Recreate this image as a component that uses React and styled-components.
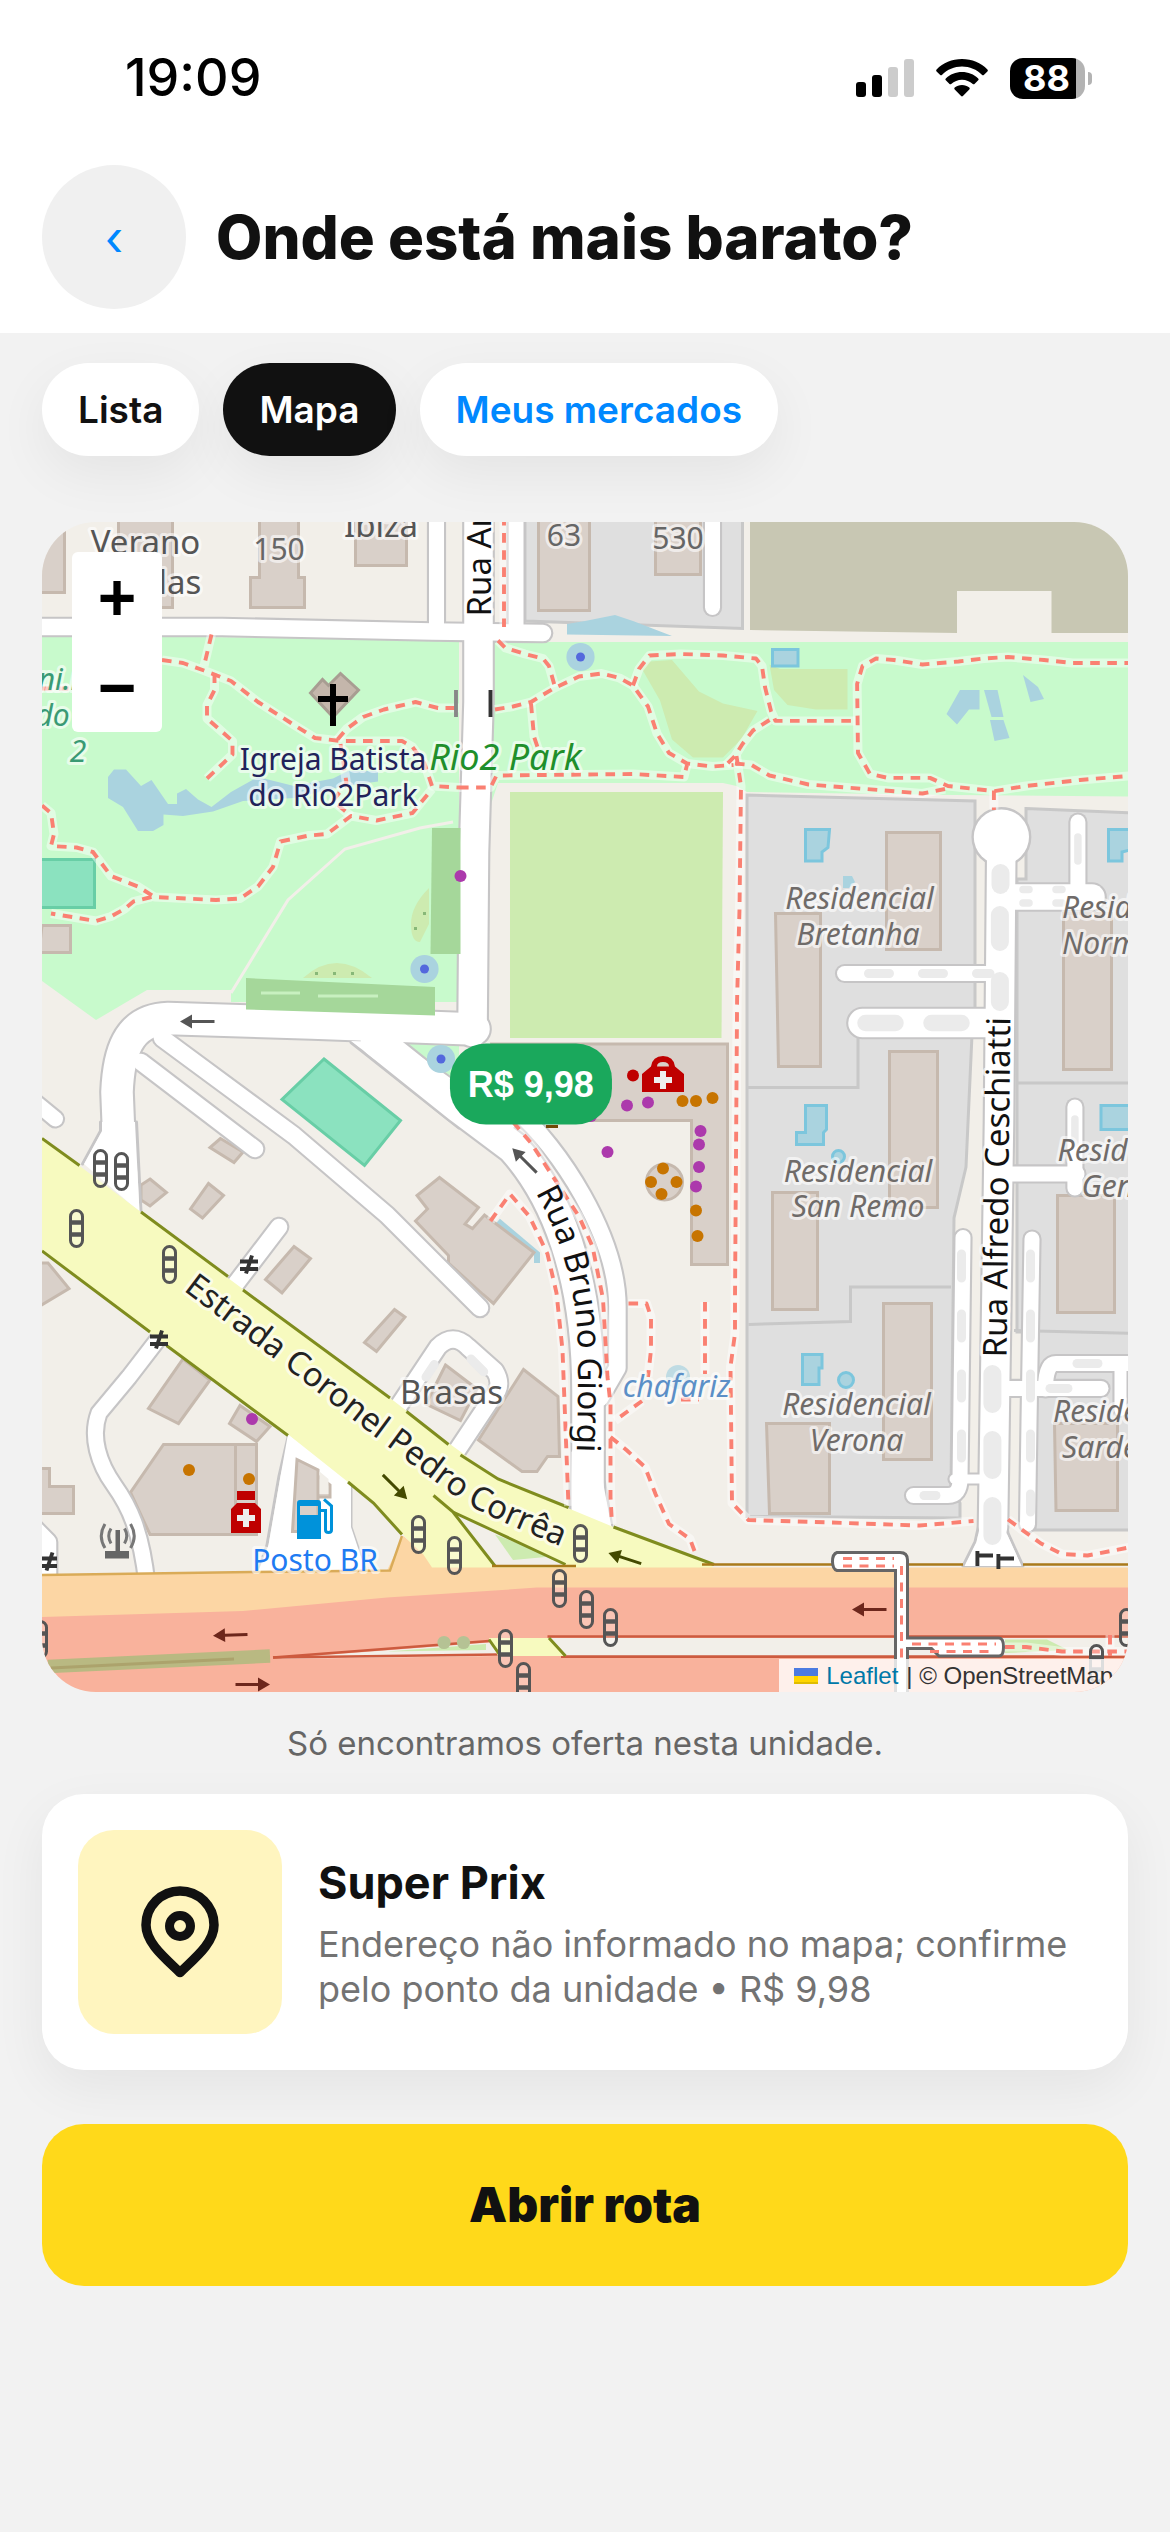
import React from 'react';
import styled, { createGlobalStyle } from 'styled-components';

export default () => (
  <Page>
    <GlobalStyle />

    <Top>
      <StatusBar>
        <Time>19:09</Time>
        <StatusIcons>
          <SignalIcon />
          <WifiIcon />
          <Battery>
            <Charge>88</Charge>
            <Cap />
          </Battery>
        </StatusIcons>
      </StatusBar>

      <Header>
        <Back aria-label="Voltar">‹</Back>
        <Title>Onde está mais barato?</Title>
      </Header>
    </Top>

    <Main>
      <Tabs>
        <Tab>Lista</Tab>
        <Tab $active>Mapa</Tab>
        <Tab $link>Meus mercados</Tab>
      </Tabs>

      <Map>
        <MapDrawing />
        <Zoom>
          <ZoomButton aria-label="Aproximar">+</ZoomButton>
          <ZoomButton aria-label="Afastar">−</ZoomButton>
        </Zoom>
        <Price>R$ 9,98</Price>
        <Attribution>
          <Flag viewBox="0 0 12 8" aria-hidden="true">
            <path fill="#4c7be1" d="M0 0h12v4H0z" />
            <path fill="#ffd500" d="M0 4h12v3H0z" />
            <path fill="#e0bc00" d="M0 7h12v1H0z" />
          </Flag>
          <a href="https://leafletjs.com">Leaflet</a>
          <span>| © OpenStreetMap</span>
        </Attribution>
      </Map>

      <Note>Só encontramos oferta nesta unidade.</Note>

      <Card>
        <PinBox>
          <PinIcon />
        </PinBox>
        <div>
          <Store>Super Prix</Store>
          <Address>
            Endereço não informado no mapa; confirme pelo ponto da unidade • R$
            9,98
          </Address>
        </div>
      </Card>

      <RouteButton>Abrir rota</RouteButton>
    </Main>
  </Page>
);

/* icons */

const SignalIcon = () => (
  <svg width="58" height="38" viewBox="0 0 58 38" aria-hidden="true">
    <rect x="0" y="23" width="10" height="15" rx="3" />
    <rect x="16" y="16" width="10" height="22" rx="3" />
    <rect x="32" y="8" width="10" height="30" rx="3" fill="#ccc" />
    <rect x="48" y="0" width="10" height="38" rx="3" fill="#ccc" />
  </svg>
);

const WifiIcon = () => (
  <svg width="52" height="38" viewBox="0 0 52 38" aria-hidden="true">
    <path d="M26 0C16 0 7 4 .6 10.400q-.9 1 0 2l3.600 3.600q.8.7 1.700 0C11.300 10.600 18.400 7.600 26 7.600s14.700 3 20.100 8.400q.9.7 1.700 0l3.600-3.600q.9-1 0-2C45 4 36 0 26 0z" />
    <path d="M26 13c-6.200 0-11.900 2.400-16.200 6.400q-1 .9 0 1.900l3.700 3.700q.8.700 1.700 0c2.900-2.700 6.700-4.300 10.800-4.300s7.900 1.600 10.800 4.300q.9.7 1.700 0l3.700-3.700q1-1 0-1.900C37.900 15.400 32.200 13 26 13z" />
    <path d="M26 26c-2.800 0-5.300 1-7.300 2.600q-1 .9 0 1.800l6.400 6.700q.9.900 1.800 0l6.400-6.700q1-.9 0-1.800C31.300 27 28.800 26 26 26z" />
  </svg>
);

const PinIcon = () => (
  <svg width="78" height="92" viewBox="0 0 78 92" aria-hidden="true">
    <path
      d="M39 86.500C24 72 5 57 5 39a34 34 0 0 1 68 0c0 18-19 33-34 47.500z"
      fill="none"
      stroke="#111"
      strokeWidth="9.500"
      strokeLinejoin="round"
    />
    <circle cx="39" cy="40" r="10.500" fill="none" stroke="#111" strokeWidth="9" />
  </svg>
);

/* map */

const greyAreas = [
  'M161-2H233.500V35.500L190 34 161 33z',
  'M235 91L311 93V171H310L308 215 304 232 303 321 306 327V332L235 331.500z',
  'M328 95.500L364 97V336H331V270H325V119H328z',
];

const greyLines = [
  'M235 188.500H272V172',
  'M303 255H269.500V266.500L235.500 267.500',
  'M325 187H364',
  'M324 269.500L364 270.500',
];

const water = [
  'M175 34L181 33 191 31 197 33 210 38 175 37.500z',
  'M22 85L24 82.500H28L33 88 36.500 86 42 94H45V90.500L48 89 52 92.500 56.500 95 63 90 72 85 84 88 97 85.500 102 83H112V86.500L101 88 84 92 67 93 57 96.500 47 98 40.500 97.500V101L37 103H32L27 95 22 92z',
  'M301.500 64L306 56H312.500V62.500H309L305 67.500z',
  'M314 56H318.500L320.500 65H316.500z',
  'M316 66H320.500L322.500 72 317.500 73z',
  'M327 51L332 55 334 59 329.500 60z',
  'M267 118H270L271 120 269 122H267z',
];

const pools = [
  'M243.500 42.500H252V48H243.500z',
  'M254.500 102.500H262.500L262 108.500 260 110V113H254.500z',
  'M355.500 102.500H364V109L360 110V113H355.500z',
  'M254.500 194.500H261.500V202.500L260.500 203.500V207.500H251.500V203.500H254.500z',
  'M353 194.500H364V202.500H353z',
  'M253.500 277.500H260V282H259V287.500H253.500z',
];

const buildings = [
  'M-2-2H7.500V23.500H-2z',
  'M25.500-2H43.500V28.500H25.500z',
  'M72.500-2H85.500V18.500H87.500V28.500H69.500V18.500H72.500z',
  'M104.500-2H121.500V14.500H104.500z',
  'M165.500-2H182.500V29.500H165.500z',
  'M204.500-2H219.500V17.500H204.500z',
  'M0 134.500H9.500V143.500H-1z',
  'M281.500 103.500H299.500V142.500H281.500z',
  'M244.500 130.500H259.500V181.500H245.500z',
  'M340.500 130.500H356.500V182.500H340.500z',
  'M282.500 176.500H298.500V228.500H282.500z',
  'M243.500 223.500H258.500V262.500H243.500z',
  'M338.500 224.500H357.500V263.500H338.500z',
  'M280.500 260.500H296.500V312.500H280.500z',
  'M241.500 300.500H262.500V330.500H242.500z',
  'M337.500 300.500H358.500V329.500H338z',
  'M150 174H228.500V247.500H216.500V199.500H160z',
  'M132.500 218.500L145.500 228.500 141 234 143.500 235.500 147.500 231 164 243.500 150.500 260.500 147 257.500 135.500 247V244.500L124.500 233 128.500 229 125 224.500z',
  'M59.500 205.500L56 208.500 64 213.500 67 210z',
  'M36 219L41.500 223.500 36 228 33 226V221z',
  'M55.500 220.500L60.500 224.500 53.500 232 49.500 229z',
  'M84 241.500L89.500 245.500 80 257 74.500 252.500z',
  'M-1 247H2L9 255.500-1 261.500z',
  'M117.500 262.500L121 265 111.500 276.500 107.500 273.500z',
  'M47 279L56 286 45.500 300.500 35.500 295.500z',
  'M66 294.500L76 301.500 71.500 306.500 62.500 300.500z',
  'M40.500 307.500H71.500V337.500H36L29.500 323.500z',
  'M-1 315.500H2.500V321.500H10.500V330.500H-1z',
  'M134.500 281L145 289 139.500 299.500 128 294z',
  'M160.500 282.500L172 291.500 172.500 311.500H168.500L165 316.500H160L145.500 306 156 289.500z',
];

// [path, width]
const roads = [
  ['M131.500-3V36', 5],
  ['M158-3V36', 5],
  ['M223.500-3V28.500', 5],
  ['M-4 35H60L130 36.500 167 37', 5.500],
  ['M145.500-3V60L144 110 143.500 170', 9.500],
  ['M144 169L90 167 42 165.500C28 166 25.500 178 25 190L26 215', 10.500],
  ['M40 172L84 204.500 115 231 128 244 146 262', 5.500],
  ['M33 180L71 209', 5.500],
  ['M-4 192L4.500 199', 5],
  ['M79 235L63 256', 5.500],
  ['M111.500 173L139 195 157 208.500C171 224 182 250 182 290V336', 10.500],
  ['M158 196C172 208 192 238 191.800 262V282L186 292', 5.500],
  ['M39 272L29 285 19 297C16 305 19 314 24 321S33 336 35 354', 5],
  ['M118 296L126 284 132 275Q137 270 142 275L151 283Q154 288 150 292L138 310', 5.500],
  ['M2 354V340L-3 335', 5.500],
  ['M267.500 150.500H316', 5],
  ['M273.500 167H318', 9.500],
  ['M345.300 100V124', 5],
  ['M322 125H350', 8.500],
  ['M344.300 195V222', 5],
  ['M322 217.300H345', 5],
  ['M307 238.500L306 319Q306 324.500 302 324.500H290.500', 5],
  ['M304 319H314', 3],
  ['M330 239L329 300 328.500 334', 5],
  ['M362 280.500H338Q334.500 280.500 334.500 289', 5],
  ['M359.500 281V296', 4],
  ['M320 288.800H353', 5],
  ['M319.800 105L319 200 317 335', 9.500],
];

// inner marks of the service and pedestrian streets: [path, width, dash]
const marks = [
  ['M319.500 117V121', 6, '4 20'],
  ['M319.300 131V160', 6, '9 13'],
  ['M316.800 284V338', 6, '10 12'],
  ['M275.500 150.500H316', 3, '7 11'],
  ['M274.500 167H312', 5.500, '10 12'],
  ['M306.500 244V314', 3, '8 12'],
  ['M294 324.500H298', 3, '6 12'],
  ['M329.500 244V330', 3, '8 12'],
  ['M345.300 105V113', 2.500, '8 20'],
  ['M327 122.500H346', 2.500, '2 9'],
  ['M327 127H346', 2.500, '2 9'],
  ['M344.300 199V208', 2.500, '8 20'],
  ['M345 280.500H352', 3, '8 20'],
  ['M336 288.800H342', 3, '8 20'],
  ['M128 285L132 279', 3, '5 20'],
  ['M143 279L149 285', 3, '6 20'],
];

const footways = [
  'M40 46L47 47 54 49.500 63 53 72 60 83 67 91 72 99.500 73H120L123.500 75 127.500 80.500 130 88 139 88.500',
  'M56.500 37.500L54 48',
  'M57.500 50.500V56L55 61V65.500L59 69 63.500 73V77.500L55 85.500',
  'M98.500 72.500L101.500 69 107 65 114 62.500 124.500 60 132 62H139',
  'M151 62.500L157 61.500 163 60 170.500 55.500 179 51.500 186.500 50.500 192.500 52 197 54.500 202 61.500 205 70.500 209 77 215 80.500 223.500 81.500 230.500 81',
  'M152 39.500L154.500 42 161 44 167 45.500 169 48 171 55',
  'M163 60.500L164 71.500 165.500 76',
  'M139 88.500H149.500L151.500 84.500 197 84 214 85 215 81',
  'M197 54.500L199 49 202.500 44.500 213 44 227 44.500 238 45.500 240 48 241 55 243 63 244.500 66.300H271.500',
  'M242.500 66L237 69.500 233.500 74 231 78 228 81',
  'M231 80.500L236.500 81 242.500 84.500 255.500 87.500 274.500 89 293.500 90.500 301 89',
  'M364 47H343.500L334 46 322 45 314 45.500 305.500 46.500 293.500 47.500 284 46 278 45.500 273.500 48 271.700 54 272 77 276 84 282 85.300H296L302 88 317.500 89.700 328 88 346 86 364 84.500',
  'M317.300 89.500V96',
  'M231.500 78L233 88 232.500 129 231.700 159 231 259V270.500L229.500 281.500 230 327 235.500 332.700 263 333.500 292.500 334.500 310.500 333',
  'M322 332.500L333 340.500 340 344 348.500 344.500 364 341.500',
  'M0 94.500L3 97 4 104 3 108 11.500 108.500 17 110 23 118 32 121.500 37.500 125 58 126 66 125.500 72 121.500 77 115 79.500 106.500 89 104.500 95 104 103 98 111.500 99.500 123.500 97 130 89',
  'M36.500 125L30.500 126.500 27.500 129 23 131.500 18 133 3 130.500',
  'M99.500 74L101.500 87 97 93 103 98',
  'M0 55.500H9',
  'M154-2V35',
  'M149.500 233L156 224 162.500 231.500 168.500 244 171.500 257 173.500 276 175.500 328',
  'M157 200L163 207 179 231.500 183.500 241.500 187 259 188.500 285 189.500 294V325L190 334',
  'M195.500 260.500H201.500L203 265V276L202 285M200 293L191 299.500M213 292.500H219M221 260V284',
  'M189.500 305L195 309.500 201 315 204.500 324 209 334 216 339 217.500 343',
  'M321 375L328 375 340 376.500H364M356 371V378',
];

const dots = [
  ['#ac39ac', 139.500, 118],
  ['#bf0000', 197, 184.500],
  ['#ac39ac', 195, 194.500],
  ['#ac39ac', 202, 193.500],
  ['#c77400', 213.500, 193],
  ['#c77400', 218, 193],
  ['#c77400', 223.500, 192],
  ['#ac39ac', 219.500, 203],
  ['#ac39ac', 219, 207.500],
  ['#ac39ac', 219, 215],
  ['#ac39ac', 218, 221.500],
  ['#c77400', 218, 229.500],
  ['#c77400', 218.500, 238],
  ['#ac39ac', 188.500, 210],
  ['#ac39ac', 183, 198],
  ['#c77400', 207, 215.500],
  ['#c77400', 203, 220],
  ['#c77400', 211.500, 220],
  ['#c77400', 206.500, 224],
  ['#ac39ac', 70, 299],
  ['#c77400', 49, 316],
  ['#c77400', 69, 319],
];

const lights = [
  [19.500, 215.500],
  [26.500, 216.500],
  [11.500, 235.500],
  [42.500, 247.500],
  [125.500, 337.500],
  [137.500, 344.500],
  [179.500, 340.500],
  [172.500, 355.500],
  [181.500, 362.500],
  [154.500, 375.500],
  [160.500, 386.500],
  [-0.500, 372.500],
  [189.500, 368.500],
  [361.500, 368.500],
  [351.500, 380.500],
];

// [x, y, angle, colour]
const arrows = [
  [52, 166.500, 180, '#555'],
  [161, 213, 225, '#555'],
  [117.500, 321.500, 45, '#444a00'],
  [63, 371, 178, '#6d271c'],
  [70, 387.500, 0, '#6d271c'],
  [276, 362.500, 180, '#6d271c'],
  [194.500, 345.500, 198, '#444a00'],
];

const MapDrawing = () => (
  <Drawing viewBox="0 0 362 390" role="img" aria-label="Mapa">
    <defs>
      <path id="estrada" d="M47 256L84 284 111 305 138 325Q146 331 182 345" />
      <path id="bruno" d="M164.500 223.500Q177.500 247 178.500 272 179 290 178 318" />
      <path id="alfredo" d="M321.500 278.500L323 145" />
    </defs>

    <path fill="#f2efe9" d="M0 0H362V390H0z" />
    <path fill="#c8c7b3" d="M236-1H363V37H336.500V23H305V37L236 36z" />
    {greyAreas.map(d => (
      <path key={d} d={d} fill="#dfdfdf" stroke="#c8c8c8" />
    ))}
    <g fill="none" stroke="#c8c8c8">
      {greyLines.map(d => (
        <path key={d} d={d} />
      ))}
    </g>

    {/* park */}
    <g fill="#c8facc">
      <path d="M0 38L139 39V160H63V156H35L18 166 0 153z" />
      <path d="M149 40H362V91.500L304 91 235 90 231.500 88 227 87H152L149 96z" />
      <path d="M120 174H139V188z" />
    </g>
    <path
      d="M63 157L82 126 101 109 126 102 137 100"
      fill="none"
      stroke="#f2efe9"
    />
    <g fill="#cdebb0">
      <path d="M156 90H227L226.500 172H156z" />
      <path d="M200 49L202.500 46.500 210 46 219 56.500 227 60.500 238.500 63 233 72.500 227 78.500H217L210 72.500 206 59.500z" />
      <path d="M242.500 47.500L246 49H268.500V62.500H258L248.500 61 244 56z" />
      <path d="M129 122Q123 128 123 134 123 140 126 140L129 134zM87 152Q98 142 110 152z" />
    </g>
    <g fill="#88b878">
      <path d="M127 130h1v1h-1zM124 135h1v1h-1zM91 150h1v1h-1zM97 150h1v1h-1zM103 150h1v1h-1z" />
    </g>
    <g fill="#8be2bf" stroke="#68cea6">
      <path d="M-1 112.500H17.500V128.500H-1z" />
      <path d="M94 179L119.500 199.500 107.500 214.500 80 192.500z" />
    </g>

    <g fill="#aad3df">
      {water.map(d => (
        <path key={d} d={d} />
      ))}
      <circle cx="212" cy="285" r="4" opacity=".7" />
    </g>
    <path d="M152 233L165 244V247" fill="none" stroke="#aad3df" strokeWidth="2" />
    <g fill="#aad3df" stroke="#7cc6dd">
      {pools.map(d => (
        <path key={d} d={d} />
      ))}
      <circle cx="265.500" cy="211.500" r="2" />
      <circle cx="268" cy="286" r="2.500" />
    </g>

    <g fill="#d9d0c9" stroke="#c6b9ae">
      {buildings.map(d => (
        <path key={d} d={d} />
      ))}
      <circle cx="207.500" cy="220" r="6" />
      <path d="M64.500 307V337" />
    </g>
    <path
      d="M89.500 57L93.500 52.500 95.500 54.500 99.500 50.500 105.500 56 97 65z"
      fill="#c4b6ab"
      stroke="#a89d92"
    />

    {/* streets: casing first, then the white fill */}
    <g
      fill="none"
      stroke="#c6c5c6"
      strokeLinecap="round"
      strokeLinejoin="round"
    >
      {roads.map(([d, w]) => (
        <path key={d} d={d} strokeWidth={w + 1.400} />
      ))}
      <circle cx="319.800" cy="105" r="9.500" />
      <path d="M313 331L311 340 307 348H327L322 337 321 331" />
      <path d="M82 305L79 318 75 341 72 350M103 321V335L108 350" />
      <path d="M19.500 200V203L13.500 214M31.500 200L33 230" />
      <path d="M187.500 320L190 335M176 320V329" />
      <path d="M103 173.500L139 202M119.500 173.500L160 202" />
    </g>
    <g fill="none" stroke="#fff" strokeLinecap="round" strokeLinejoin="round">
      {roads.map(([d, w]) => (
        <path key={d} d={d} strokeWidth={w} />
      ))}
    </g>
    <g fill="#fff">
      <circle cx="319.800" cy="105" r="9.200" />
      <path d="M313.500 331L311.500 340 307.500 348H326.500L321.500 337 320.500 331z" />
      <path d="M82 304L103 320V335L108 350H72L75.500 341 79.500 318z" />
      <path d="M20 200V203L14 214 32.500 230 31 200z" />
      <path d="M176.500 310V330L190 336 187 320V292z" />
      <path d="M103 173L119.500 173.500 158 201 150 209z" />
    </g>
    <path
      d="M85 312.500L92 316V336.500H83.500zM92 318L96 321V325H92z"
      fill="#d9d0c9"
      stroke="#c6b9ae"
    />
    <path d="M92.500 316.500L95.500 319V324H92.500z" fill="#f2efe9" />
    <g fill="none" stroke="#ebebeb" strokeLinecap="round">
      {marks.map(([d, w, dash]) => (
        <path key={d} d={d} strokeWidth={w} strokeDasharray={dash} />
      ))}
    </g>

    {/* hedges */}
    <g fill="#a5d79a">
      <path d="M130 102H139.500V144H129.500z" />
      <path d="M68 152L131 155V164.500L68 162.500z" />
      <path d="M73 157H86M92 158H112" stroke="#c8f0c0" />
    </g>

    {/* Estrada Coronel Pedro Corrêa */}
    <path
      fill="#f7fabf"
      d="M0 205L13 215 33 230 62 252 116 292 135.500 307 152 319 176 329 190.500 335 223.500 347V349H130L120 337 110.500 326.500 102 320 82.500 304.500 36 270.500 0 243z"
    />
    <path fill="#f2efe9" d="M137 330L151 336 174.500 348H150.500z" />
    <path fill="#cdebb0" d="M151 337.500L164 342.500 168 345 157 346z" />
    <g fill="none" stroke="#7f8c1e">
      <path d="M0 205.500L12.500 214.500M33 230L62 251.500M67 256L116 292M121.500 296.500L135.500 307.500M139.500 311L152 319 175.500 328.500M190.500 335L224 347.500" />
      <path d="M0 243L36 270M41.500 274.500L82 304.500M102 320L110.500 327 120 337.500" />
      <path d="M130.500 324.500L137 330 151 336.500 174.500 347.500M137 330L151 348" />
    </g>

    {/* avenue */}
    <path
      fill="#fcd6a4"
      d="M0 351L70 350 115 349.500 120.500 338 127 344 130 348.500H362V356L0 366z"
    />
    <path
      d="M0 351L70 350 116 349.500 120 338"
      fill="none"
      stroke="#d9ab58"
      strokeWidth=".800"
    />
    <path
      d="M150 348H178M220 347.500H307M327 347.500H362"
      stroke="#a97a1b"
      strokeWidth=".900"
    />
    <path
      fill="#f9b29c"
      d="M0 365L67 363 115 358.500 165 355.200H362V390H0z"
    />
    <path fill="#f2efe9" d="M77 379L149 373.500 169 372H362V378H151z" />
    <path fill="#cdebb0" d="M115 376.500L148 374V376zM321 372.500H335L342 376 321 377z" />
    <g fill="none" stroke="#cd5b3f" strokeWidth=".900">
      <path d="M77 378.500L149 373M168.500 371.500H362" />
      <path d="M77 378.500L152 377.500M173 378.200H362" />
    </g>
    <path d="M2 381.500L76 378" stroke="#b9b982" strokeWidth="4.500" />
    <path d="M3 382L64 379" stroke="#aca36c" />
    <path fill="#f7fabf" d="M149 372H168.500L174 378H152z" />
    <path d="M149 372.500L152.500 377.500M169 372L174.500 378" stroke="#7f8c1e" />
    <g fill="#b5c294">
      <circle cx="134" cy="373.500" r="2.200" />
      <circle cx="140.500" cy="373.500" r="2.200" />
    </g>

    <g fill="none" strokeLinejoin="round">
      <g stroke="#fff" strokeOpacity=".45" strokeWidth="3">
        {footways.map(d => (
          <path key={d} d={d} />
        ))}
      </g>
      <g stroke="#fa8072" strokeWidth="1.300" strokeDasharray="3.200 2.500">
        {footways.map(d => (
          <path key={d} d={d} />
        ))}
      </g>
    </g>

    {/* footbridge */}
    <g fill="#fff" stroke="#666">
      <path d="M284.500 349.500H265Q263.500 349 263.500 346.500T265 343.500H286Q288.500 343.500 288.500 346V372H319Q320.500 372 320.500 375T319 378H299L296.500 375.500H288.500V392H284.500z" />
    </g>
    <path
      d="M267 345.500H284M267 348H284M286.500 348V380M290 374H318M296 376.500H318"
      stroke="#fa8072"
      strokeDasharray="3 2.500"
    />

    {/* gates and barriers */}
    <g stroke="#333" strokeWidth="1.300">
      <path d="M138 56V65" stroke="#888" />
      <path d="M149.500 56V65" />
      <path d="M311.800 343V348M312 344.500H317M318.800 344V349M319 345.500H324" />
      <path d="M66 246.500H72M66 249H72M68 250.500L70 244.500" />
      <path d="M36 271.500H42M36 274H42M38 275.500L40 269.500" />
      <path d="M0 345.500H5M0 348H5M1.500 349.500L3.500 343.500" />
    </g>

    {/* fountains */}
    {[[179.500, 45], [127.500, 149], [133, 179]].map(([x, y]) => (
      <g key={x}>
        <circle cx={x} cy={y} r="4.700" fill="#aad3df" />
        <circle cx={x} cy={y} r="1.500" fill="#5468dd" />
      </g>
    ))}

    {dots.map(([fill, x, y]) => (
      <circle key={`${x} ${y}`} cx={x} cy={y} r="2" fill={fill} />
    ))}
    <path fill="#734a08" d="M168 201h4v1h-4z" />

    {lights.map(([x, y]) => (
      <TrafficLight key={`${x} ${y}`} x={x} y={y} />
    ))}
    {arrows.map(([x, y, angle, colour]) => (
      <g
        key={`${x} ${y}`}
        transform={`translate(${x} ${y}) rotate(${angle})`}
        fill={colour}
      >
        <path d="M-5.500-.5H2V-2.300L6 0 2 2.300V.5H-5.500z" />
      </g>
    ))}

    {/* church */}
    <path d="M96 54h2v4h4v2h-4v8h-2v-8h-4v-2h4z" />

    {/* first aid bag */}
    <path
      fill="#bf0000"
      fillRule="evenodd"
      d="M200 190V184L203 181.500Q203.500 178 207 178T211 181.500L214 184V190zM205 181.500H209Q209 180 207 180T205 181.500z"
    />
    <path fill="#eee" d="M206 183h2v2h2v2h-2v2h-2v-2h-2v-2h2z" />

    {/* pharmacy bottle */}
    <path
      fill="#bf0000"
      d="M65 323H71V326H65zM63 337V329L65 327H71L73 329V337z"
    />
    <path fill="#eee" d="M67 329h2v2h2v2h-2v2h-2v-2h-2v-2h2z" />

    {/* fuel pump */}
    <path
      fill="#0092da"
      fillRule="evenodd"
      d="M85 339V327Q85 326 86 326H92Q93 326 93 327V339zM86 328V331H92V328z"
    />
    <path
      d="M93 329.500H94.500V336Q94.500 336.800 95.500 336.800T96.500 336V328L94 325.800"
      fill="none"
      stroke="#0092da"
    />

    {/* antenna */}
    <path fill="#666" d="M24.500 336H26V343H29V345.500H21V343H24.500z" />
    <path
      d="M23 335.500Q21.500 338 23 340.500M21 334Q18.500 338 21 342M27.500 335.500Q29 338 27.500 340.500M29.500 334Q32 338 29.500 342"
      fill="none"
      stroke="#777"
    />

    <Label x="34.500" y="10.500" $size={11}>Verano</Label>
    <Label x="46" y="24" $size={11}>las</Label>
    <Label x="79" y="12.500" $size={10} $color="#666">150</Label>
    <Label x="113" y="5" $size={11}>Ibiza</Label>
    <Label x="174" y="8" $size={10} $color="#666">63</Label>
    <Label x="212" y="9" $size={10} $color="#666">530</Label>
    <Label x="6" y="56" $italic $color="#3a9a74">ni.r</Label>
    <Label x="3.500" y="68" $italic $color="#3a9a74">do</Label>
    <Label x="12" y="80" $italic $color="#3a9a74">2</Label>
    <Label x="97" y="82.500" $color="#22225a">Igreja Batista</Label>
    <Label x="97" y="94.500" $color="#22225a">do Rio2Park</Label>
    <Label x="154.500" y="82.500" $italic $size={12} $color="#1f8f2b">Rio2 Park</Label>

    <Label x="272.500" y="129" $italic $color="#6f6b69">Residencial</Label>
    <Label x="272" y="141" $italic $color="#6f6b69">Bretanha</Label>
    <Label x="272" y="220" $italic $color="#6f6b69">Residencial</Label>
    <Label x="272" y="231.500" $italic $color="#6f6b69">San Remo</Label>
    <Label x="271.500" y="297.500" $italic $color="#6f6b69">Residencial</Label>
    <Label x="271.500" y="309.500" $italic $color="#6f6b69">Verona</Label>
    <Label x="340" y="132" $start $italic $color="#6f6b69">Reside</Label>
    <Label x="340" y="144" $start $italic $color="#6f6b69">Norm</Label>
    <Label x="338.500" y="213" $start $italic $color="#6f6b69">Resid</Label>
    <Label x="346.500" y="225" $start $italic $color="#6f6b69">Gen</Label>
    <Label x="337" y="300" $start $italic $color="#6f6b69">Reside</Label>
    <Label x="340" y="312" $start $italic $color="#6f6b69">Sarde</Label>

    <Label x="136.500" y="294" $size={11}>Brasas</Label>
    <Label x="211.500" y="291.500" $italic $color="#5b8fc7">chafariz</Label>
    <Label x="91" y="349.500" $color="#1f7bf2">Posto BR</Label>

    <Label $start $size={11} $color="#111" transform="translate(149.500 31.500) rotate(-90)">
      Rua Ar
    </Label>
    <Label $start $size={11} $color="#111">
      <textPath href="#alfredo">Rua Alfredo Ceschiatti</textPath>
    </Label>
    <Label $start $size={11} $color="#111">
      <textPath href="#bruno">Rua Bruno Giorgi</textPath>
    </Label>
    <Label $start $size={11} $color="#222">
      <textPath href="#estrada">Estrada Coronel Pedro Corrêa</textPath>
    </Label>
  </Drawing>
);

const TrafficLight = ({ x, y }) => (
  <g transform={`translate(${x} ${y})`} fill="none" stroke="#555">
    <rect x="-2" y="-6" width="4" height="12" rx="2" fill="#fff" fillOpacity=".25" />
    <path d="M-2-2H2M-2 2H2" strokeWidth="1.500" />
  </g>
);

/* styles */

const GlobalStyle = createGlobalStyle`
  * {
    box-sizing: border-box;
  }

  body {
    margin: 0;
    background: #f2f2f2;
    color: #111;
    font-family: Inter, 'Liberation Sans', sans-serif;
  }

  button {
    border: 0;
    padding: 0;
    font-family: inherit;
    cursor: pointer;
  }
`;

const Page = styled.div`
  min-height: 100vh;
`;

const Top = styled.header`
  background: #fff;
`;

const StatusBar = styled.div`
  display: flex;
  justify-content: space-between;
  align-items: center;
  padding: 48px 78px 33px 125px;
  color: #000;
`;

const Time = styled.span`
  font-size: 52px;
  font-weight: 500;
  line-height: 60px;
`;

const StatusIcons = styled.div`
  display: flex;
  align-items: center;
  gap: 22px;
`;

const Battery = styled.div`
  display: flex;
  align-items: center;
  gap: 3px;
`;

const Charge = styled.span`
  width: 75px;
  padding-right: 2px;
  border-radius: 13px;
  background: linear-gradient(to right, #000 66px, #b3b3b3 66px);
  color: #fff;
  font-size: 36px;
  font-weight: 700;
  line-height: 41px;
  text-align: center;
`;

const Cap = styled.span`
  width: 4px;
  height: 13px;
  border-radius: 0 4px 4px 0;
  background: #b3b3b3;
`;

const Header = styled.div`
  display: flex;
  align-items: center;
  gap: 30px;
  padding: 24px 42px;
`;

const Back = styled.button`
  flex: none;
  width: 144px;
  height: 144px;
  border-radius: 50%;
  background: #f0f0f0;
  color: #08f;
  font-size: 48px;
`;

const Title = styled.h1`
  margin: 0;
  font-size: 60px;
  font-weight: 800;
  line-height: 72px;
`;

const Main = styled.main`
  display: flex;
  flex-direction: column;
  padding: 30px 42px;
`;

const Tabs = styled.nav`
  display: flex;
  gap: 24px;
  margin-bottom: 66px;
`;

const Tab = styled.button`
  padding: 0 36px;
  border-radius: 48px;
  background: ${props => (props.$active ? '#111' : '#fff')};
  color: ${props => (props.$active ? '#fff' : props.$link ? '#08f' : '#111')};
  box-shadow: 0 18px 54px rgba(0, 0, 0, 0.06);
  font-size: 37px;
  font-weight: 600;
  line-height: 93px;
`;

const Map = styled.section`
  position: relative;
  overflow: hidden;
  aspect-ratio: 1086 / 1170;
  border-radius: 54px;
`;

const Drawing = styled.svg`
  display: block;
  width: 100%;
  height: 100%;
`;

const Label = styled.text`
  fill: ${props => props.$color || '#555'};
  stroke: rgba(255, 255, 255, 0.6);
  stroke-width: 2px;
  stroke-linejoin: round;
  paint-order: stroke;
  font-family: 'Noto Sans', sans-serif;
  font-size: ${props => props.$size || 10}px;
  font-style: ${props => (props.$italic ? 'italic' : 'normal')};
  text-anchor: ${props => (props.$start ? 'start' : 'middle')};
`;

const Zoom = styled.div`
  position: absolute;
  top: 30px;
  left: 30px;
  display: flex;
  flex-direction: column;
  overflow: hidden;
  border-radius: 6px;
`;

const ZoomButton = styled.button`
  width: 90px;
  height: 90px;
  background: #fff;
  color: #000;
  font: bold 66px/90px 'Liberation Sans', sans-serif;
`;

const Price = styled.div`
  position: absolute;
  top: 48%;
  left: 45%;
  transform: translate(-50%, -50%);
  padding: 0 18px;
  border-radius: 36px;
  background: #1aa85c;
  color: #fff;
  font: bold 36px/81px 'Liberation Sans', sans-serif;
  white-space: nowrap;
`;

const Attribution = styled.div`
  position: absolute;
  right: 0;
  bottom: 0;
  display: flex;
  align-items: center;
  gap: 8px;
  padding: 0 15px;
  background: rgba(255, 255, 255, 0.8);
  color: #333;
  font: 24px/33px 'Liberation Sans', sans-serif;

  a {
    color: #0078a8;
    text-decoration: none;
  }
`;

const Flag = styled.svg`
  width: 24px;
  height: 16px;
`;

const Note = styled.p`
  margin: 30px 0;
  color: #666;
  font-size: 33px;
  line-height: 42px;
  text-align: center;
`;

const Card = styled.article`
  display: flex;
  align-items: center;
  gap: 36px;
  margin-bottom: 54px;
  padding: 36px;
  border-radius: 42px;
  background: #fff;
  box-shadow: 0 18px 54px rgba(0, 0, 0, 0.06);
`;

const PinBox = styled.div`
  flex: none;
  display: flex;
  align-items: center;
  justify-content: center;
  width: 204px;
  height: 204px;
  border-radius: 36px;
  background: #fff5bf;
`;

const Store = styled.h2`
  margin: 3px 0 12px;
  font-size: 45px;
  font-weight: 700;
  line-height: 54px;
`;

const Address = styled.p`
  margin: 0;
  color: #737373;
  font-size: 36px;
  line-height: 45px;
`;

const RouteButton = styled.button`
  border-radius: 42px;
  background: #ffd91a;
  color: #111;
  font-size: 48px;
  font-weight: 900;
  line-height: 162px;
`;
